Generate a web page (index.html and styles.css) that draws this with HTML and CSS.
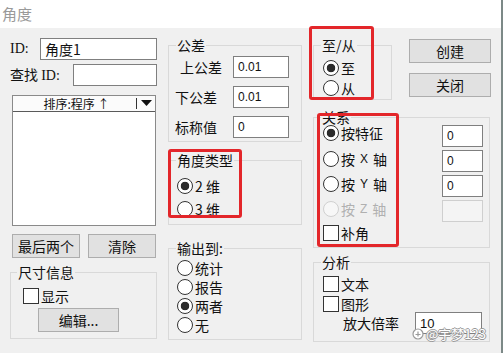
FILE: index.html
```html
<!DOCTYPE html>
<html lang="zh-CN">
<head>
<meta charset="UTF-8">
<title>角度</title>
<link rel="stylesheet" href="styles.css">
</head>
<body>
  <div class="window">
    <div class="titlebar">角度</div>

    <div class="dialog">
      <!-- Left column -->
      <div class="col col-left">
        <div class="row">
          <span class="lbl serif">ID:</span>
          <input class="edit edit-name" type="text" value="角度1">
        </div>
        <div class="row row-find">
          <span class="lbl">查找 <span class="serif">ID:</span></span>
          <input class="edit edit-find" type="text" value="">
        </div>
        <div class="listview">
          <div class="lv-head">
            <span class="lv-title">排序:程序 ↑</span>
            <span class="lv-drop">
              <svg width="11" height="7" viewBox="0 0 11 7"><polygon points="0,0 11,0 5.5,6" fill="#111"/></svg>
            </span>
          </div>
          <div class="lv-body"></div>
        </div>
        <div class="btn-row">
          <button class="btn btn-half">最后两个</button>
          <button class="btn btn-half">清除</button>
        </div>
        <fieldset class="group group-size">
          <legend>尺寸信息</legend>
          <div class="group-body">
            <label class="check"><input type="checkbox">显示</label>
            <button class="btn btn-edit">编辑...</button>
          </div>
        </fieldset>
      </div>

      <!-- Middle column -->
      <div class="col col-mid">
        <fieldset class="group group-tol">
          <legend>公差</legend>
          <div class="group-body tol-grid">
            <span class="lbl lbl-upper">上公差</span><input class="edit edit-tol" type="text" value="0.01">
            <span class="lbl">下公差</span><input class="edit edit-tol" type="text" value="0.01">
            <span class="lbl">标称值</span><input class="edit edit-tol" type="text" value="0">
          </div>
        </fieldset>
        <fieldset class="group group-type">
          <legend>角度类型</legend>
          <div class="group-body">
            <label class="radio"><input type="radio" name="type" checked>2 维</label>
            <label class="radio"><input type="radio" name="type">3 维</label>
          </div>
        </fieldset>
        <fieldset class="group group-out">
          <legend>输出到:</legend>
          <div class="group-body">
            <label class="radio"><input type="radio" name="out">统计</label>
            <label class="radio"><input type="radio" name="out">报告</label>
            <label class="radio"><input type="radio" name="out" checked>两者</label>
            <label class="radio"><input type="radio" name="out">无</label>
          </div>
        </fieldset>
      </div>

      <!-- Right column -->
      <div class="col col-right">
        <div class="top-row">
          <fieldset class="group group-dir">
            <legend>至/从</legend>
            <div class="group-body">
              <label class="radio"><input type="radio" name="dir" checked>至</label>
              <label class="radio"><input type="radio" name="dir">从</label>
            </div>
          </fieldset>
          <div class="cmd-col">
            <button class="btn btn-cmd">创建</button>
            <button class="btn btn-cmd">关闭</button>
          </div>
        </div>
        <fieldset class="group group-rel">
          <legend>关系</legend>
          <div class="group-body rel-grid">
            <label class="radio"><input type="radio" name="rel" checked>按特征</label>
            <input class="edit edit-rel" type="text" value="0">
            <label class="radio"><input type="radio" name="rel">按<span class="axis">X</span>轴</label>
            <input class="edit edit-rel" type="text" value="0">
            <label class="radio"><input type="radio" name="rel">按<span class="axis">Y</span>轴</label>
            <input class="edit edit-rel" type="text" value="0">
            <label class="radio disabled"><input type="radio" name="rel" disabled>按<span class="axis">Z</span>轴</label>
            <input class="edit edit-rel" type="text" value="" disabled>
            <label class="check"><input type="checkbox">补角</label>
          </div>
        </fieldset>
        <fieldset class="group group-ana">
          <legend>分析</legend>
          <div class="group-body">
            <label class="check"><input type="checkbox">文本</label>
            <label class="check check-gap"><input type="checkbox">图形</label>
            <div class="zoom-row">
              <span class="lbl">放大倍率</span>
              <input class="edit edit-zoom" type="text" value="10">
            </div>
          </div>
        </fieldset>
      </div>
    </div>

    <!-- annotation marks over the dialog -->
    <div class="mark mark-dir"></div>
    <div class="mark mark-type"></div>
    <div class="mark mark-rel"></div>
    <div class="watermark">
      <svg width="12" height="12" viewBox="0 0 12 12"><circle cx="6" cy="6" r="5" fill="#fff" stroke="#9a9a9a" stroke-width="1.2"/><path d="M3.5 6.5h5M6 3.5v5" stroke="#9a9a9a" stroke-width="1.2"/></svg>
      <span>@宇梦123</span>
    </div>
  </div>
</body>
</html>
```

FILE: styles.css
```css
/* Base */
* { box-sizing: border-box; }
body {
  margin: 0;
  font-family: "Noto Sans CJK SC", "Microsoft YaHei", sans-serif;
  font-size: 14px;
  color: #111;
}
.window {
  position: relative;
  width: 503px;
  height: 353px;
  overflow: hidden;
  border-right: 2px solid #7c8987;
  background: #f0f0f0;
}

/* Title bar */
.titlebar {
  height: 28px;
  background: #fff;
  color: #9a9a9a;
  font-size: 15px;
  line-height: 28px;
  padding-left: 2px;
}

/* Layout */
.dialog {
  display: flex;
  align-items: flex-start;
  height: 325px;
}
.col { display: flex; flex-direction: column; }
.col-left { margin-left: 10px; width: 147px; padding-top: 10px; }
.col-mid { margin-left: 11px; width: 134px; padding-top: 9px; }
.col-right { margin-left: 11px; width: 178px; padding-top: 9px; }

.row {
  display: flex;
  justify-content: space-between;
  align-items: center;
  height: 22px;
}
.row-find { margin-top: 4px; }
.lbl { line-height: 22px; white-space: nowrap; }
.serif { font-family: "Liberation Serif", serif; font-size: 14px; }

/* Edit boxes */
.edit {
  height: 22px;
  margin: 0;
  padding: 0 4px;
  border: 1px solid #7f7f7f;
  background: #fff;
  font-family: "Liberation Sans", sans-serif;
  font-size: 12px;
  color: #111;
  outline: none;
}
.edit:disabled { background: #f4f4f4; border-color: #cfcfcf; }
.edit-name { width: 117px; font-family: "Noto Sans CJK SC", sans-serif; font-size: 14px; }
.edit-find { width: 84px; }
.edit-tol { width: 56px; }
.edit-rel { width: 41px; }
.edit-zoom { width: 67px; font-size: 13px; }

/* List view */
.listview {
  margin: 9px 0 0 2px;
  width: 144px;
  height: 131px;
  border: 1px solid #8a8a8a;
  background: #fff;
}
.lv-head {
  display: flex;
  height: 16px;
  border-bottom: 1px solid #5a5a5a;
  background: #fbfbfb;
  font-size: 12px;
  line-height: 15px;
}
.lv-title { flex: 1; text-align: center; padding-left: 4px; }
.lv-drop {
  width: 19px;
  display: flex;
  align-items: center;
  justify-content: center;
  border-left: 1px solid #333;
  margin: 2px 0;
}

/* Buttons */
.btn {
  height: 24px;
  margin: 0;
  padding: 0;
  border: 1px solid #adadad;
  background: #e1e1e1;
  font-family: inherit;
  font-size: 14px;
  color: #111;
}
.btn-row { display: flex; gap: 8px; margin: 8px 0 0 2px; }
.btn-half { width: 68px; }
.btn-edit { width: 81px; margin: 4px 0 0 15px; }
.btn-cmd { width: 82px; }

/* Group boxes */
.group {
  margin: 0;
  padding: 0;
  border: 1px solid #d9d9d9;
  min-width: 0;
}
.group legend {
  margin-left: 7px;
  padding: 0 1px;
  font-size: 14px;
  line-height: 16px;
}
.group-body { display: flex; flex-direction: column; align-items: flex-start; }

.group-size { margin-top: 6px; }
.group-size legend { margin-left: 6px; }
.group-size .group-body { padding: 8px 0 6px 12px; }

.tol-grid {
  display: grid;
  grid-template-columns: 58px 56px;
  grid-auto-rows: 22px;
  row-gap: 8px;
  padding: 3px 0 3px 6px;
}
.lbl-upper { padding-left: 5px; }

.group-type { margin-top: 10px; }
.group-type .group-body { padding: 8px 0 5px 8px; gap: 3px; }
.group-type .radio { height: 20px; }

.group-out { margin-top: 15px; }
.group-out .group-body { padding: 2px 0 5px 8px; }
.group-out .radio { height: 19px; }

.top-row { display: flex; align-items: flex-start; }
.group-dir { width: 79px; }
.group-dir .group-body { padding: 5px 0 1px 9px; }
.group-dir .radio { height: 20px; }
.cmd-col { display: flex; flex-direction: column; gap: 10px; margin-left: 17px; padding-top: 2px; }

.group-rel { margin-top: 9px; width: 177px; }
.rel-grid {
  display: grid;
  grid-template-columns: 1fr 41px;
  grid-template-rows: 22px 22px 22px 22px 18px;
  row-gap: 3px;
  padding: 0 6px 4px 9px;
}

.group-ana { margin-top: 6px; width: 177px; }
.group-ana .group-body { padding: 6px 0 7px 9px; }
.check-gap { margin-top: 4px; }
.zoom-row { display: flex; align-items: center; margin-left: 20px; }
.zoom-row .lbl { width: 72px; }

/* Radio and check boxes */
.radio, .check {
  display: flex;
  align-items: center;
  gap: 2px;
  white-space: nowrap;
  line-height: 16px;
}
.check { height: 16px; }
.radio input, .check input {
  appearance: none;
  -webkit-appearance: none;
  flex: none;
  margin: 0;
  width: 16px;
  height: 16px;
  background: #fff;
  border: 1px solid #333;
}
.radio input { border-radius: 50%; }
.radio input:checked { background: radial-gradient(circle, #2b2b2b 0 4px, #fff 4.6px); }
.radio.disabled { color: #b0b0b0; }
.radio input:disabled { border-color: #d0d0d0; background: #f7f7f7; }
.axis {
  font-family: "Liberation Sans", sans-serif;
  font-size: 12px;
  padding: 1px 3px 0;
}

/* Red annotation frames */
.mark {
  position: absolute;
  border: 3px solid #e3262a;
  border-radius: 3px;
}
.mark-dir { left: 309px; top: 26px; width: 65px; height: 74px; }
.mark-type { left: 168px; top: 149px; width: 74px; height: 69px; }
.mark-rel { left: 317px; top: 113px; width: 82px; height: 134px; }

/* Watermark */
.watermark {
  position: absolute;
  left: 412px;
  top: 324px;
  display: flex;
  align-items: center;
  gap: 2px;
  font-size: 13px;
  color: #fff;
  text-shadow: 1px 0 #999, -1px 0 #999, 0 1px #999, 0 -1px #999;
}
```
